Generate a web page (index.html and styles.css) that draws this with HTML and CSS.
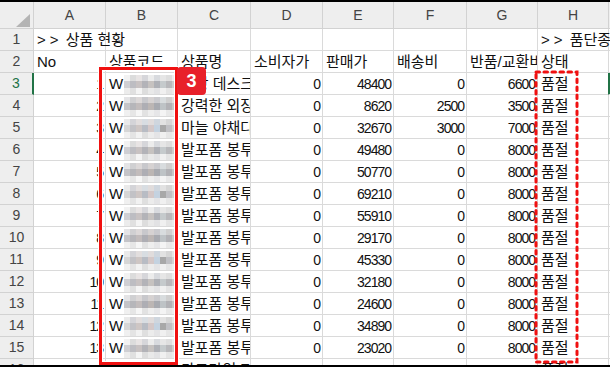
FILE: index.html
```html
<!DOCTYPE html>
<html lang="ko">
<head>
  <meta charset="UTF-8" />
  <title>상품 현황</title>
  <link rel="stylesheet" href="styles.css">
</head>
<body>

  <div class="sheet">
    <div class="grid">
      <!-- column headers -->
      <div class="hd corner"><span class="tri"></span></div>
      <div class="hd">A</div><div class="hd">B</div><div class="hd">C</div><div class="hd">D</div>
      <div class="hd">E</div><div class="hd">F</div><div class="hd">G</div><div class="hd">H</div><div class="hd"></div>

      <div class="rh">1</div>
      <div class="c ov"><span class="gt">&gt;&gt;</span> 상품 현황</div><div class="c"></div><div class="c"></div><div class="c"></div>
      <div class="c"></div><div class="c"></div><div class="c"></div><div class="c ov"><span class="gt">&gt;&gt;</span> 품단종 현황</div><div class="c"></div>

      <div class="rh">2</div>
      <div class="c">No</div><div class="c">상품코드</div><div class="c">상품명</div><div class="c">소비자가</div>
      <div class="c">판매가</div><div class="c">배송비</div><div class="c">반품/교환비</div><div class="c">상태</div><div class="c"></div>

      <div class="rh active">3</div>
      <div class="c n">1</div><div class="c">W<span class="mz m1"></span></div><div class="c">책상 데스크 정리대</div><div class="c n">0</div>
      <div class="c n">48400</div><div class="c n">0</div><div class="c n">6600</div><div class="c sel-edge">품절</div><div class="c sel"></div>

      <div class="rh">4</div>
      <div class="c n">2</div><div class="c">W<span class="mz m2"></span></div><div class="c">강력한 외장하드 케이스</div><div class="c n">0</div>
      <div class="c n">8620</div><div class="c n">2500</div><div class="c n">3500</div><div class="c">품절</div><div class="c"></div>

      <div class="rh">5</div>
      <div class="c n">3</div><div class="c">W<span class="mz m3"></span></div><div class="c">마늘 야채다지기</div><div class="c n">0</div>
      <div class="c n">32670</div><div class="c n">3000</div><div class="c n">7000</div><div class="c">품절</div><div class="c"></div>

      <div class="rh">6</div>
      <div class="c n">4</div><div class="c">W<span class="mz m1"></span></div><div class="c">발포폼 봉투</div><div class="c n">0</div>
      <div class="c n">49480</div><div class="c n">0</div><div class="c n">8000</div><div class="c">품절</div><div class="c"></div>

      <div class="rh">7</div>
      <div class="c n">5</div><div class="c">W<span class="mz m2"></span></div><div class="c">발포폼 봉투</div><div class="c n">0</div>
      <div class="c n">50770</div><div class="c n">0</div><div class="c n">8000</div><div class="c">품절</div><div class="c"></div>

      <div class="rh">8</div>
      <div class="c n">6</div><div class="c">W<span class="mz m3"></span></div><div class="c">발포폼 봉투</div><div class="c n">0</div>
      <div class="c n">69210</div><div class="c n">0</div><div class="c n">8000</div><div class="c">품절</div><div class="c"></div>

      <div class="rh">9</div>
      <div class="c n">7</div><div class="c">W<span class="mz m1"></span></div><div class="c">발포폼 봉투</div><div class="c n">0</div>
      <div class="c n">55910</div><div class="c n">0</div><div class="c n">8000</div><div class="c">품절</div><div class="c"></div>

      <div class="rh">10</div>
      <div class="c n">8</div><div class="c">W<span class="mz m2"></span></div><div class="c">발포폼 봉투</div><div class="c n">0</div>
      <div class="c n">29170</div><div class="c n">0</div><div class="c n">8000</div><div class="c">품절</div><div class="c"></div>

      <div class="rh">11</div>
      <div class="c n">9</div><div class="c">W<span class="mz m3"></span></div><div class="c">발포폼 봉투</div><div class="c n">0</div>
      <div class="c n">45330</div><div class="c n">0</div><div class="c n">8000</div><div class="c">품절</div><div class="c"></div>

      <div class="rh">12</div>
      <div class="c n">10</div><div class="c">W<span class="mz m1"></span></div><div class="c">발포폼 봉투</div><div class="c n">0</div>
      <div class="c n">32180</div><div class="c n">0</div><div class="c n">8000</div><div class="c">품절</div><div class="c"></div>

      <div class="rh">13</div>
      <div class="c n">11</div><div class="c">W<span class="mz m2"></span></div><div class="c">발포폼 봉투</div><div class="c n">0</div>
      <div class="c n">24600</div><div class="c n">0</div><div class="c n">8000</div><div class="c">품절</div><div class="c"></div>

      <div class="rh">14</div>
      <div class="c n">12</div><div class="c">W<span class="mz m3"></span></div><div class="c">발포폼 봉투</div><div class="c n">0</div>
      <div class="c n">34890</div><div class="c n">0</div><div class="c n">8000</div><div class="c">품절</div><div class="c"></div>

      <div class="rh">15</div>
      <div class="c n">13</div><div class="c">W<span class="mz m1"></span></div><div class="c">발포폼 봉투</div><div class="c n">0</div>
      <div class="c n">23020</div><div class="c n">0</div><div class="c n">8000</div><div class="c">품절</div><div class="c"></div>

      <div class="rh">16</div>
      <div class="c n">14</div><div class="c">W<span class="mz m2"></span></div><div class="c">카드라인 지갑</div><div class="c n">4500</div>
      <div class="c n">12900</div><div class="c n">3000</div><div class="c n">3000</div><div class="c">품절</div><div class="c"></div>
    </div>

    <!-- annotations -->
    <div class="mark-box"></div>
    <div class="badge">3</div>
    <svg class="dash-box" width="47" height="296" viewBox="0 0 47 296">
      <rect x="2" y="2" width="41" height="290" fill="none" stroke="#f01010" stroke-width="3"
            stroke-dasharray="3.5 4.5" stroke-linecap="round" />
    </svg>
  </div>

</body>
</html>
```

FILE: styles.css
```css
* {
  margin: 0;
  padding: 0;
  box-sizing: border-box;
}

body {
  background: #fff;
  font-family: 'Liberation Sans', 'Noto Sans CJK KR', sans-serif;
}

.sheet {
  position: relative;
  width: 610px;
  height: 367px;
  overflow: hidden;
  border-top: 2px solid #000;
  border-bottom: 2px solid #000;
  background: #fff;
}

.grid {
  display: grid;
  grid-template-columns: 34px 72px 72px 73px 72px 71px 73px 71px 71px 1fr;
  grid-template-rows: 27px;
  grid-auto-rows: 22px;
  font-size: 15px;
  color: #111;
}

/* headers */
.hd, .rh {
  background: #eeeeee;
  color: #444;
  border-right: 1px solid #d2d2d2;
  border-bottom: 1px solid #d2d2d2;
  text-align: center;
  font-size: 14px;
}

.hd {
  line-height: 26px;
}

.rh {
  line-height: 21px;
}

.rh.active {
  color: #217346;
  border-right: 2px solid #217346;
}

.corner {
  position: relative;
}

.tri {
  position: absolute;
  left: 16px;
  top: 12px;
  width: 14px;
  height: 13px;
  background: #b4b4b4;
  clip-path: polygon(100% 0, 100% 100%, 0 100%);
}

/* cells */
.c {
  border-right: 1px solid #dadada;
  border-bottom: 1px solid #dadada;
  padding: 0 2px 0 3px;
  line-height: 21px;
  white-space: nowrap;
  overflow: hidden;
}

.c.ov {
  overflow: visible;
}

.c.n {
  text-align: right;
  font-size: 14px;
  letter-spacing: -1px;
  padding-top: 1px;
}

.gt {
  letter-spacing: 4px;
  margin-right: -1px;
}

.sel-edge {
  border-right-color: #217346;
}

.sel {
  background: #217346;
}

/* pixelated code */
.mz {
  display: inline-block;
  vertical-align: top;
  margin-top: 2px;
  margin-left: 1px;
  width: 55px;
  height: 19px;
}

.m1 {
  background:
    linear-gradient(90deg, #f2f2f2 0 6px, #dcdcdc 6px 12px, #e8e4e4 12px 18px, #d6d6da 18px 24px, #ececec 24px 30px, #d8dade 30px 36px, #e6e6e6 36px 42px, #dedede 42px 48px, #eeeeee 48px) top / 100% 6px no-repeat,
    linear-gradient(90deg, #cfcfd3 0 6px, #bdbdc2 6px 12px, #c8c2c2 12px 18px, #b3b3b8 18px 24px, #c6c2c0 24px 30px, #aeb0b6 30px 36px, #c5cacc 36px 42px, #b8b8bb 42px 48px, #cccccc 48px) center / 100% 7px no-repeat,
    linear-gradient(90deg, #ececec 0 6px, #e0e0e0 6px 12px, #f4f4f4 12px 18px, #dddddd 18px 24px, #e9e9e9 24px 30px, #e2e2e4 30px 36px, #f0f0f0 36px 42px, #e4e4e4 42px 48px, #eaeaea 48px) bottom / 100% 6px no-repeat;
}

.m2 {
  background:
    linear-gradient(90deg, #e4e4e6 0 6px, #d0d0d2 6px 12px, #dcd8d8 12px 18px, #c8c8cc 18px 24px, #d6d2d2 24px 30px, #cacace 30px 36px, #d8dcde 36px 42px, #cfcfcf 42px 48px, #e0e0e0 48px) top / 100% 6px no-repeat,
    linear-gradient(90deg, #c4c4c8 0 6px, #b6b6ba 6px 12px, #c2bcbc 12px 18px, #aeaeb4 18px 24px, #bcb6b4 24px 30px, #a8aab0 30px 36px, #bec3c6 36px 42px, #b2b2b6 42px 48px, #c6c6c6 48px) center / 100% 7px no-repeat,
    linear-gradient(90deg, #f0f0f0 0 6px, #e6e6e6 6px 12px, #f6f6f6 12px 18px, #e2e2e2 18px 24px, #eeeeee 24px 30px, #e6e6e8 30px 36px, #f4f4f4 36px 42px, #e8e8e8 42px 48px, #eeeeee 48px) bottom / 100% 6px no-repeat;
}

.m3 {
  background:
    linear-gradient(90deg, #eaeaea 0 6px, #d4d4d8 6px 12px, #e2dede 12px 18px, #d8dde2 18px 24px, #e0dcdc 24px 30px, #cfd6de 30px 36px, #e2e2e2 36px 42px, #d6d6d6 42px 48px, #e6e6e6 48px) top / 100% 6px no-repeat,
    linear-gradient(90deg, #d6d6d6 0 6px, #c2c2c6 6px 12px, #cec6c4 12px 18px, #b8bcc4 18px 24px, #d4c8c8 24px 30px, #c4d2e0 30px 36px, #a8a8a8 36px 42px, #c0c0c4 42px 48px, #d2d2d2 48px) center / 100% 7px no-repeat,
    linear-gradient(90deg, #f0f0f0 0 6px, #e4e4e4 6px 12px, #f2f2f2 12px 18px, #dfdfdf 18px 24px, #ececec 24px 30px, #e4e4e6 30px 36px, #f0f0f0 36px 42px, #e6e6e6 42px 48px, #ededed 48px) bottom / 100% 6px no-repeat;
}

/* annotations */
.mark-box {
  position: absolute;
  left: 99px;
  top: 65px;
  width: 79px;
  height: 298px;
  border: 3px solid #f01010;
  box-shadow: 0 0 0 1px #fff, inset 0 0 0 1px #fff;
}

.badge {
  position: absolute;
  left: 177px;
  top: 65px;
  width: 29px;
  height: 28px;
  background: #e8202a;
  border-radius: 4px;
  color: #fff;
  font-family: 'Liberation Sans', sans-serif;
  font-weight: bold;
  font-size: 18px;
  line-height: 28px;
  text-align: center;
}

.dash-box {
  position: absolute;
  left: 534px;
  top: 68px;
}
```
